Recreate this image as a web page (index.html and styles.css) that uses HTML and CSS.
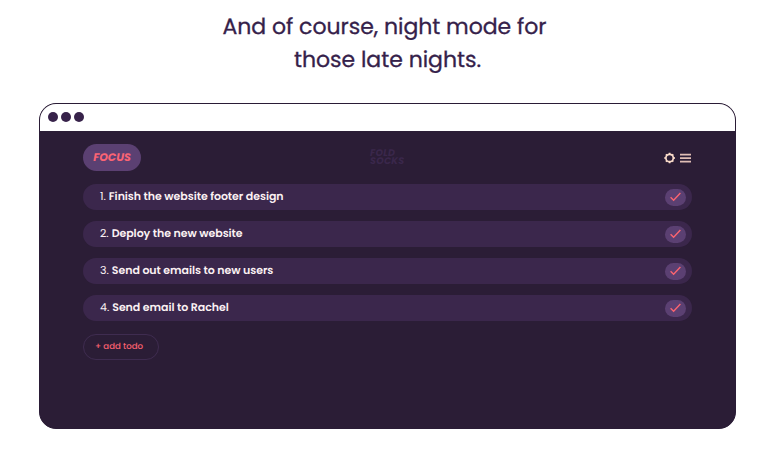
FILE: index.html
```html
<!DOCTYPE html>
<html lang="en">
<head>
<meta charset="utf-8">
<title>Night mode</title>
<link rel="stylesheet" href="styles.css">
</head>
<body>
<h1 class="title"><span class="line">And of course, night mode for</span><span class="line line-b">those late nights.</span></h1>
<main class="window">
  <div class="titlebar"><i class="dot"></i><i class="dot"></i><i class="dot"></i></div>
  <div class="app">
    <header class="toolbar">
      <div class="focus"><span>FOCUS</span></div>
      <div class="logo"><span class="fold">FOLD</span><span class="socks">SOCKS</span></div>
      <div class="actions">
        <svg width="12" height="12" viewBox="0 0 12 12"><circle cx="5.6" cy="6" r="3.7" fill="none" stroke="#fbdcca" stroke-width="1.7"/><path d="M5.6 .8v1.3M5.6 9.9v1.3M.4 6h1.3M9.5 6h1.3M1.9 2.3l.8.8M8.5 8.9l.8.8M9.3 2.3l-.8.8M2.7 8.9l-.8.8" stroke="#fbdcca" stroke-width="1.8"/></svg>
        <svg width="12" height="12" viewBox="0 0 12 12"><path d="M0 2.6h11M0 6.1h11M0 9.6h11" stroke="#e0beb5" stroke-width="1.6"/></svg>
      </div>
    </header>
    <ol class="todos">
      <li class="todo"><span class="num">1.</span><span class="text">Finish the website footer design</span><span class="check"><svg width="12" height="10" viewBox="0 0 12 10"><path d="M.6 5.2l3 3L10.4 1" fill="none" stroke="#fa6470" stroke-width="1.4"/></svg></span></li>
      <li class="todo"><span class="num">2.</span><span class="text">Deploy the new website</span><span class="check"><svg width="12" height="10" viewBox="0 0 12 10"><path d="M.6 5.2l3 3L10.4 1" fill="none" stroke="#fa6470" stroke-width="1.4"/></svg></span></li>
      <li class="todo"><span class="num">3.</span><span class="text">Send out emails to new users</span><span class="check"><svg width="12" height="10" viewBox="0 0 12 10"><path d="M.6 5.2l3 3L10.4 1" fill="none" stroke="#fa6470" stroke-width="1.4"/></svg></span></li>
      <li class="todo"><span class="num">4.</span><span class="text">Send email to Rachel</span><span class="check"><svg width="12" height="10" viewBox="0 0 12 10"><path d="M.6 5.2l3 3L10.4 1" fill="none" stroke="#fa6470" stroke-width="1.4"/></svg></span></li>
    </ol>
    <div class="add"><span>+ add todo</span></div>
  </div>
</main>
</body>
</html>
```
FILE: styles.css
```css
* { box-sizing: border-box; }
body { margin: 0; height: 450px; overflow: hidden; background: #fff; font-family: Poppins, Inter, sans-serif; text-rendering: geometricPrecision; }
.title { margin: 0; padding: 11px 6px 0 0; color: #35214a; font-size: 22px; font-weight: 400; line-height: 32.5px; text-align: center; -webkit-text-stroke: 0.3px #35214a; }
.line { display: block; white-space: nowrap; letter-spacing: -0.03px; }
.line-b { padding-left: 6px; }
.window { width: 697.5px; height: 325.5px; margin: 27px 0 0 38.5px; border: 1.5px solid #2a1c36; border-radius: 17px; overflow: hidden; background: #2b1d36; }
.titlebar { display: flex; align-items: center; gap: 3.4px; height: 26.5px; padding: 0 0 1px 8px; background: #fff; }
.dot { width: 10px; height: 10px; border-radius: 50%; background: #37224a; }
.app { height: 298px; padding: 13.5px 43px 0 43.5px; background: #2b1d36; }
.toolbar { display: flex; align-items: center; height: 27px; }
.focus { display: flex; align-items: center; justify-content: center; width: 58px; height: 27px; border-radius: 14px; background: #5b4072; color: #fb6474; font-size: 11px; font-weight: 700; font-style: italic; }
.logo { display: flex; flex-direction: column; margin-left: 229px; color: #3a274b; font-size: 9.5px; line-height: 8px; font-weight: 700; font-style: italic; letter-spacing: 0.25px; }
.actions { display: flex; gap: 4px; margin-left: auto; padding-top: 1px; }
.actions svg, .check svg { display: block; }
.todos { display: grid; gap: 11px; margin: 13px 0 0; padding: 0; list-style: none; }
.todo { display: flex; align-items: center; height: 26px; padding: 0 6px 0 17px; border-radius: 13px; background: #3b274c; color: #faf0f2; font-size: 11px; line-height: 16px; white-space: nowrap; }
.num { margin-right: 3px; }
.num, .text { padding-bottom: 2px; }
.text { font-weight: 600; letter-spacing: -0.05px; }
.check { display: flex; align-items: center; justify-content: center; width: 21px; height: 17px; margin-left: auto; border-radius: 9px; background: #5b4072; }
.add { display: flex; align-items: center; width: 76px; height: 26px; margin-top: 13px; padding: 1px 0 0 11px; border: 1px solid #3f2c50; border-radius: 13px; color: #f8606f; font-size: 8.6px; font-weight: 500; }
```
